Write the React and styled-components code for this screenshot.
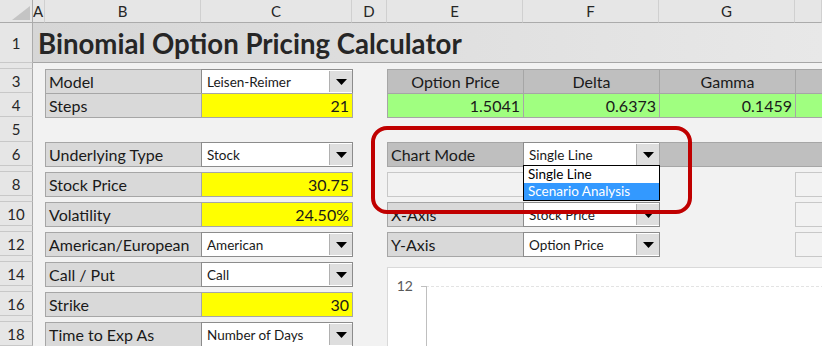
import React from 'react';
import styled, { createGlobalStyle } from 'styled-components';

const GlobalStyle = createGlobalStyle`
	html, body {
		margin: 0;
		padding: 0;
		background: #f2f2f2;
		overflow: hidden;
	}
	body {
		font-family: Lato, "Liberation Sans", sans-serif;
		color: #1a1a1a;
	}
`;

// header row, then excel rows 1..18
const ROW_HEIGHTS = [23, 40, 6, 24, 24, 25, 24, 6, 24, 6, 24, 6, 24, 6, 24, 6, 24, 6, 24];
const COLS = ['A', 'B', 'C', 'D', 'E', 'F', 'G', 'H'];
const COL = { A: 2, B: 3, C: 4, D: 5, E: 6, F: 7, G: 8, H: 9 };
const SHOWN_ROWS = [1, 3, 4, 5, 6, 8, 10, 12, 14, 16, 18];

const fields = [
	{ row: 6, label: 'Underlying Type', drop: 'Stock' },
	{ row: 8, label: 'Stock Price', input: '30.75' },
	{ row: 10, label: 'Volatility', input: '24.50%' },
	{ row: 12, label: 'American/European', drop: 'American' },
	{ row: 14, label: 'Call / Put', drop: 'Call' },
	{ row: 16, label: 'Strike', input: '30' },
	{ row: 18, label: 'Time to Exp As', drop: 'Number of Days' },
];

const outputs = [
	{ col: 'E', head: 'Option Price', value: '1.5041' },
	{ col: 'F', head: 'Delta', value: '0.6373' },
	{ col: 'G', head: 'Gamma', value: '0.1459' },
	{ col: 'H', head: '', value: '' },
];

const App = () => {
	return (
		<>
			<GlobalStyle />
			<Sheet>
				<Corner>
					<svg width="18" height="14" viewBox="0 0 18 14">
						<polygon points="18,0 18,14 0,14" fill="#c4c4c4" />
					</svg>
				</Corner>
				{COLS.map((c) => (
					<ColHead key={c} $col={COL[c]}>
						{c === 'H' ? '' : c}
					</ColHead>
				))}
				{ROW_HEIGHTS.slice(1).map((h, i) => (
					<RowHead key={i} $row={i + 1}>
						{SHOWN_ROWS.includes(i + 1) ? i + 1 : ''}
					</RowHead>
				))}

				<TitleBar>Binomial Option Pricing Calculator</TitleBar>

				<Label $row={3} $col={COL.B}>Model</Label>
				<Dropdown row={3} col={COL.C} value="Leisen-Reimer" />
				<Label $row={4} $col={COL.B}>Steps</Label>
				<Input $row={4} $col={COL.C}>21</Input>

				{outputs.map((o) => (
					<React.Fragment key={o.col}>
						<OutHead $row={3} $col={COL[o.col]}>{o.head}</OutHead>
						<OutValue $row={4} $col={COL[o.col]}>{o.value}</OutValue>
					</React.Fragment>
				))}

				{fields.map((f) => (
					<React.Fragment key={f.row}>
						<Label $row={f.row} $col={COL.B}>{f.label}</Label>
						{f.drop ? (
							<Dropdown row={f.row} col={COL.C} value={f.drop} />
						) : (
							<Input $row={f.row} $col={COL.C}>{f.input}</Input>
						)}
					</React.Fragment>
				))}

				<Label $row={6} $col={COL.E} $dark>Chart Mode</Label>
				<Dropdown row={6} col={COL.F} value="Single Line" />
				<Band $row={6} />

				<EmptyBox $row={8} $col={COL.E} />
				<EmptyBox $row={8} $col={COL.H} />
				<Label $row={10} $col={COL.E}>X-Axis</Label>
				<Dropdown row={10} col={COL.F} value="Stock Price" />
				<EmptyBox $row={10} $col={COL.H} />
				<Label $row={12} $col={COL.E}>Y-Axis</Label>
				<Dropdown row={12} col={COL.F} value="Option Price" />
				<EmptyBox $row={12} $col={COL.H} />

				<Chart>
					<svg width="100%" height="100%">
						<line x1="38" y1="18.5" x2="440" y2="18.5" stroke="#e3e3e3" strokeDasharray="3 2" />
						<line x1="33" y1="18.5" x2="38" y2="18.5" stroke="#bfbfbf" />
						<line x1="38.5" y1="18" x2="38.5" y2="100" stroke="#bfbfbf" />
						<AxisText x="25" y="23" textAnchor="end">12</AxisText>
					</svg>
				</Chart>

				<DropList>
					<ListItem>Single Line</ListItem>
					<ListItem $active>Scenario Analysis</ListItem>
				</DropList>
				<Ring />
			</Sheet>
		</>
	);
};

const Dropdown = ({ row, col, value }) => (
	<DropCell $row={row} $col={col}>
		<DropText>{value}</DropText>
		<DropButton>
			<svg width="11" height="6" viewBox="0 0 11 6">
				<polygon points="0,0 11,0 5.5,6" fill="#000" />
			</svg>
		</DropButton>
	</DropCell>
);

const Sheet = styled.div`
	position: relative;
	display: grid;
	grid-template-columns: 33px 12px 156px 151px 35px 136px 136px 136px 1fr;
	grid-template-rows: ${ROW_HEIGHTS.map((h) => h + 'px').join(' ')};
	width: 822px;
	height: 346px;
	overflow: hidden;
	background: #f2f2f2;
`;

const Corner = styled.div`
	grid-row: 1;
	grid-column: 1;
	background: #e6e6e6;
	border-right: 1px solid #ababab;
	border-bottom: 1px solid #ababab;
	display: flex;
	align-items: flex-end;
	justify-content: flex-end;
	padding: 0 2px 2px 0;
`;

const ColHead = styled.div`
	grid-row: 1;
	grid-column: ${(p) => p.$col};
	background: #e6e6e6;
	border-right: 1px solid #d0d0d0;
	border-bottom: 1px solid #ababab;
	display: flex;
	align-items: center;
	justify-content: ${(p) => (p.$col === 2 ? 'flex-start' : 'center')};
	font-size: 15px;
	color: #262626;
	overflow: hidden;
`;

const RowHead = styled.div`
	grid-row: ${(p) => p.$row + 1};
	grid-column: 1;
	background: #e6e6e6;
	border-right: 1px solid #ababab;
	border-bottom: 1px solid #c8c8c8;
	display: flex;
	align-items: center;
	justify-content: center;
	font-size: 15px;
	color: #262626;
	overflow: hidden;
`;

const TitleBar = styled.div`
	grid-row: 2;
	grid-column: 2 / -1;
	background: linear-gradient(90deg, #d6d6d6, #e8e8e8);
	border-bottom: 1px solid #a6a6a6;
	display: flex;
	align-items: center;
	padding: 2px 0 0 5px;
	font-size: 27.6px;
	font-weight: 700;
	color: #262626;
	white-space: nowrap;
`;

const Cell = styled.div`
	grid-row: ${(p) => p.$row + 1};
	grid-column: ${(p) => p.$col};
	margin: 0 -1px -1px 0;
	border: 1px solid #a6a6a6;
	display: flex;
	align-items: center;
	font-size: 16px;
	white-space: nowrap;
	overflow: hidden;
`;

const Label = styled(Cell)`
	background: ${(p) => (p.$dark ? '#bfbfbf' : '#d9d9d9')};
	padding-left: 3px;
`;

const Input = styled(Cell)`
	background: #ffff00;
	justify-content: flex-end;
	padding-right: 3px;
`;

const OutHead = styled(Cell)`
	background: #bfbfbf;
	justify-content: center;
`;

const OutValue = styled(Cell)`
	background: #a0ff80;
	justify-content: flex-end;
	padding-right: 3px;
`;

const DropCell = styled(Cell)`
	background: #fff;
	border-color: #8c8c8c;
	align-items: stretch;
	font-size: 13.5px;
`;

const DropText = styled.span`
	flex: 1;
	display: flex;
	align-items: center;
	padding-left: 5px;
`;

const DropButton = styled.span`
	width: 22px;
	margin: 1px 0;
	background: #dedede;
	border-left: 1px solid #b0b0b0;
	display: flex;
	align-items: center;
	justify-content: center;
`;

const Band = styled(Cell)`
	grid-column: ${COL.G} / -1;
	background: #bfbfbf;
	border-right: none;
`;

const EmptyBox = styled(Cell)`
	border-color: #c8c8c8;
	background: #f2f2f2;
`;

const Chart = styled.div`
	grid-row: 15 / -1;
	grid-column: ${COL.E} / -1;
	margin: 5px 0 0 0;
	background: #fff;
	border: 1px solid #d9d9d9;
	border-right: none;
	border-bottom: none;
	overflow: hidden;
`;

const AxisText = styled.text`
	font-family: Lato, "Liberation Sans", sans-serif;
	font-size: 14px;
	fill: #595959;
`;

const DropList = styled.div`
	position: absolute;
	left: 523px;
	top: 165px;
	width: 137px;
	box-sizing: border-box;
	background: #fff;
	border: 1px solid #000;
	display: flex;
	flex-direction: column;
	font-size: 13.5px;
`;

const ListItem = styled.div`
	height: 17px;
	line-height: 17px;
	padding-left: 4px;
	background: ${(p) => (p.$active ? '#3399ff' : 'transparent')};
	color: ${(p) => (p.$active ? '#fff' : '#000')};
`;

const Ring = styled.div`
	position: absolute;
	left: 371px;
	top: 126px;
	width: 321px;
	height: 88px;
	box-sizing: border-box;
	border: 4px solid #c00000;
	border-radius: 16px;
	pointer-events: none;
`;

export default App;
